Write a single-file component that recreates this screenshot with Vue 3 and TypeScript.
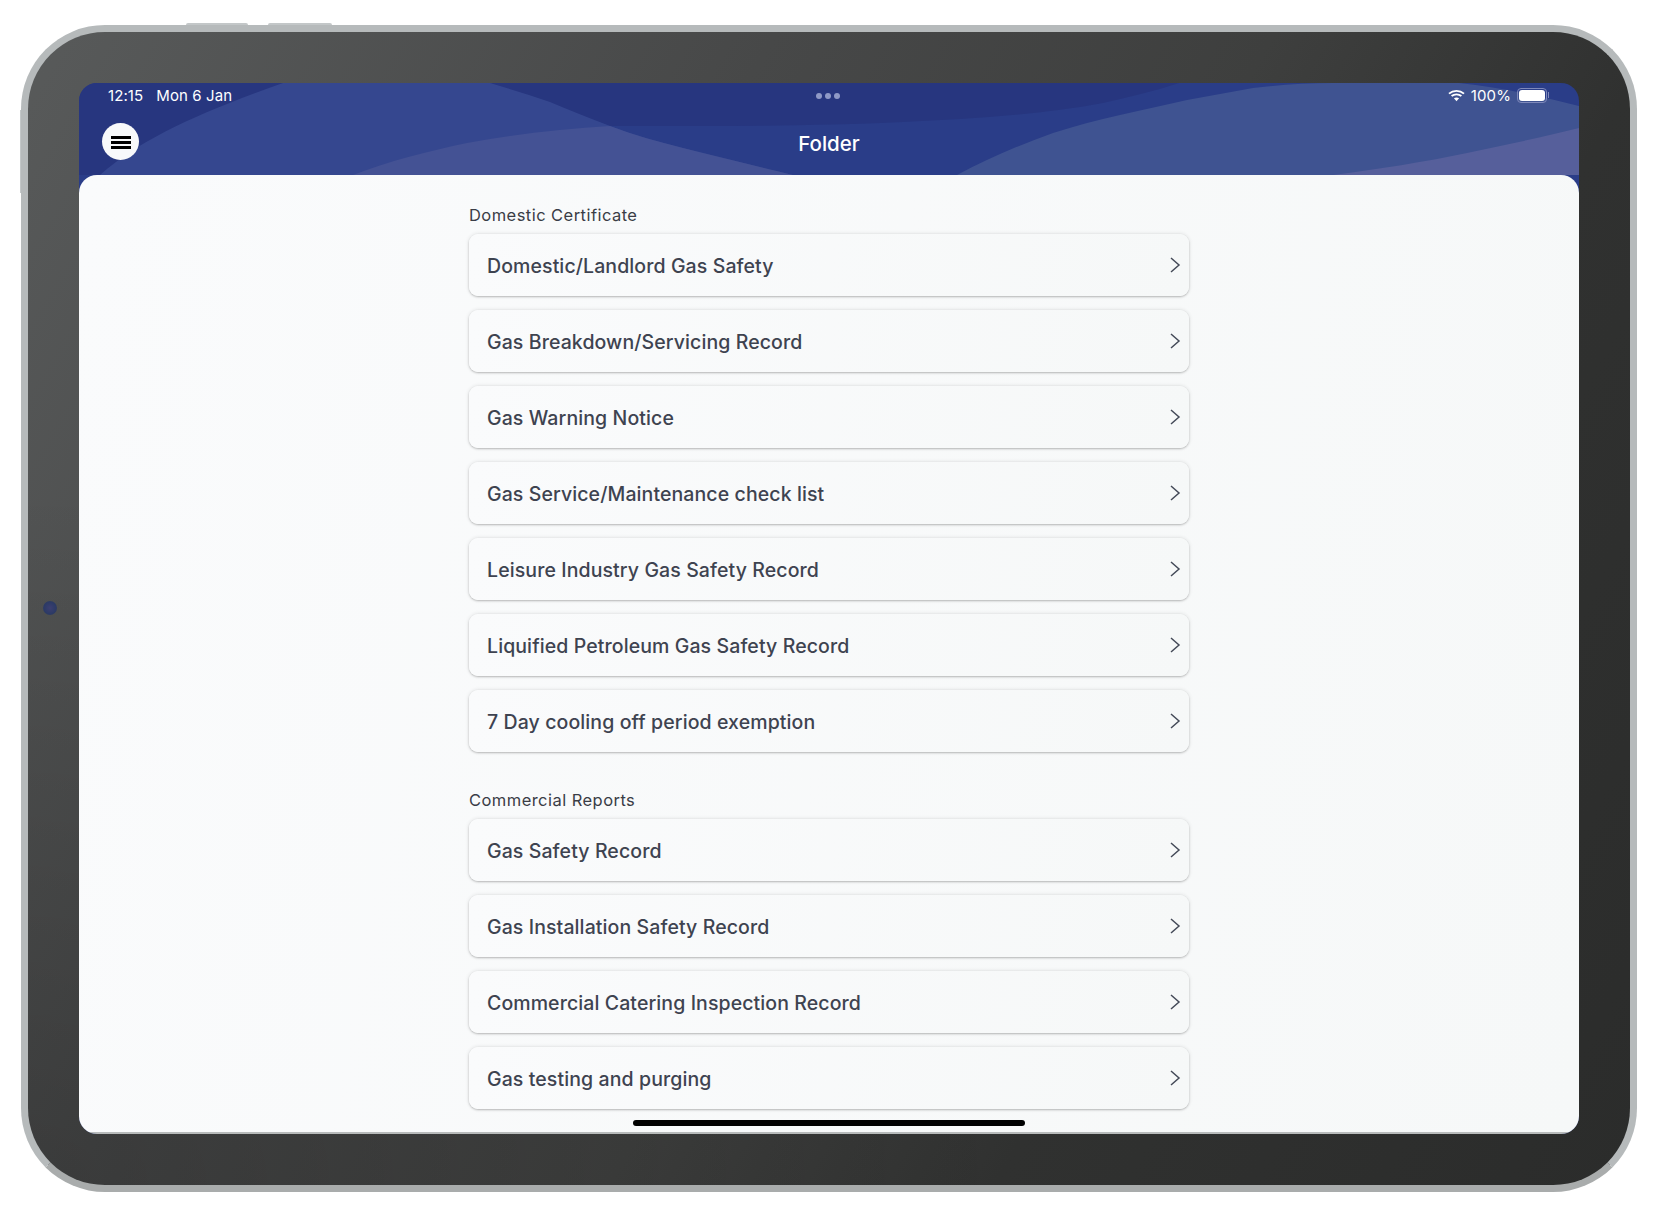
<template>
  <div class="page">
    <div class="device">
      <span class="sideBtn btnA"></span>
      <span class="sideBtn btnB"></span>
      <span class="sideBtn btnC"></span>
      <span class="camera"></span>
      <div class="screen">
        <header class="header">
          <svg class="waves" viewBox="0 0 1500 92" preserveAspectRatio="none">
            <path fill="#27367f" d="M0 0H411V92H0Z" />
            <path fill="#27367f" d="M411 0H1100C1076 8 1050 14 1024 20C960 32 890 36 824 39C760 42 690 43 621 43C590 43 560 43 531 43Z" />
            <path fill="#35478f" d="M21 92C60 57 121 29 204 0H411C431 6 451 12 471 19C490 27 510 35 531 43C555 52 580 59 604 65C640 74 680 84 714 92Z" />
            <path fill="#445294" d="M274 92C310 78 350 68 388 60C436 51 485 46 531 43C555 52 580 59 604 65C640 74 680 84 714 92Z" />
            <path fill="#3f5391" d="M878 92C908 76 940 62 974 50C996 43 1018 37 1041 32C1063 27 1086 22 1108 17C1130 13 1152 9 1174 5C1200 2 1228 0 1254 0H1380C1420 4 1460 13 1500 23V92Z" />
            <path fill="#565f9b" d="M1254 92C1300 86 1345 79 1388 70C1426 62 1464 54 1500 45V92Z" />
          </svg>
          <div class="statusBar">
            <div class="statusLeft"><span>12:15</span><span>Mon 6 Jan</span></div>
            <div class="dots"><i></i><i></i><i></i></div>
            <div class="statusRight">
              <svg class="wifi" width="17" height="13" viewBox="0 0 17 13">
                <path fill="none" stroke="#fff" stroke-width="1.9" d="M1 4.6C5.2.9 11.8.9 16 4.6M3.6 7.1C6.4 4.8 10.6 4.8 13.4 7.1" />
                <path fill="#fff" d="M5.9 9.3C7.4 8.2 9.6 8.2 11.1 9.3L8.5 12.2Z" />
              </svg>
              <span>100%</span>
              <span class="battery"><b></b></span>
            </div>
          </div>
          <div class="navBar">
            <button class="menuBtn"><i></i><i></i><i></i></button>
            <div class="title">Folder</div>
            <div></div>
          </div>
        </header>
        <main class="panel">
          <section v-for="group of groups" :key="group.title" class="group">
            <div class="groupTitle">{{ group.title }}</div>
            <div class="rows">
              <div v-for="item of group.items" :key="item" class="row">
                <span class="rowText">{{ item }}</span>
                <svg width="12" height="16" viewBox="0 0 12 16">
                  <path fill="none" stroke="#444a58" stroke-width="1.5" d="M2 1L10 8L2 15" />
                </svg>
              </div>
            </div>
          </section>
          <div class="homeBar"></div>
        </main>
      </div>
    </div>
  </div>
</template>
<script setup lang="ts">
const groups: { title: string, items: string[] }[] = [
  {
    title: 'Domestic Certificate',
    items: [
      'Domestic/Landlord Gas Safety',
      'Gas Breakdown/Servicing Record',
      'Gas Warning Notice',
      'Gas Service/Maintenance check list',
      'Leisure Industry Gas Safety Record',
      'Liquified Petroleum Gas Safety Record',
      '7 Day cooling off period exemption',
    ],
  },
  {
    title: 'Commercial Reports',
    items: [
      'Gas Safety Record',
      'Gas Installation Safety Record',
      'Commercial Catering Inspection Record',
      'Gas testing and purging',
    ],
  },
]
</script>
<style>
html, body {
  margin: 0;
  background: #fff;
}
</style>
<style scoped>
.page {
  width: 1660px;
  height: 1208px;
  box-sizing: border-box;
  padding: 25px 0 0 21px;
  overflow: hidden;
  font-family: Inter, "Liberation Sans", sans-serif;
}

.device {
  position: relative;
  width: 1616px;
  height: 1167px;
  box-sizing: border-box;
  padding: 51px;
  border: 7px solid #b6babb;
  border-bottom-color: #a9acac;
  border-radius: 84px;
  background:
    radial-gradient(ellipse 1000px 700px at 0 100%, rgba(0, 0, 0, .2), rgba(0, 0, 0, 0)),
    linear-gradient(120deg, #585a5a 0%, #474848 33%, #3e3f3e 55%, #303130 72%, #2b2c2b 100%);
}

.sideBtn {
  position: absolute;
  background: #c3c7c8;
}

.btnA,
.btnB {
  top: -9px;
  height: 2px;
  border-radius: 2px 2px 0 0;
}

.btnA {
  left: 158px;
  width: 62px;
}

.btnB {
  left: 240px;
  width: 64px;
}

.btnC {
  left: -8px;
  top: 78px;
  width: 1px;
  height: 83px;
}

.camera {
  position: absolute;
  left: 15px;
  top: 569px;
  width: 14px;
  height: 14px;
  border-radius: 50%;
  background: radial-gradient(circle, #3c3f70 0%, #2c3a66 60%, #354050 100%);
}

.screen {
  display: flex;
  flex-direction: column;
  height: 100%;
  border-radius: 18px;
  overflow: hidden;
  background: #2a3d88;
}

.header {
  position: relative;
  flex: none;
  height: 92px;
  color: #fff;
}

.waves {
  position: absolute;
  inset: 0;
  width: 100%;
  height: 100%;
}

.statusBar,
.navBar {
  position: relative;
  display: grid;
  grid-template-columns: 1fr auto 1fr;
  align-items: center;
}

.statusBar {
  height: 25px;
  padding: 0 32px 0 29px;
  font-size: 15px;
  letter-spacing: .1px;
}

.statusLeft {
  display: flex;
  gap: 13px;
}

.dots {
  display: flex;
  gap: 3px;
}

.dots i {
  width: 6px;
  height: 6px;
  border-radius: 50%;
  background: #8f99c6;
}

.statusRight {
  display: flex;
  align-items: center;
  justify-content: flex-end;
  gap: 6px;
}

.battery {
  position: relative;
  display: block;
  width: 30px;
  height: 15px;
  box-sizing: border-box;
  padding: 1px;
  border: 1px solid #7f89bb;
  border-radius: 4px;
}

.battery b {
  display: block;
  height: 100%;
  border-radius: 3px;
  background: #fff;
}

.battery::after {
  content: '';
  position: absolute;
  right: -3px;
  top: 3px;
  width: 1px;
  height: 6px;
  background: #7f89bb;
}

.navBar {
  height: 67px;
  padding: 0 23px;
  align-items: start;
}

.menuBtn {
  display: flex;
  flex-direction: column;
  align-items: center;
  justify-content: center;
  gap: 2px;
  width: 37px;
  height: 37px;
  margin-top: 15px;
  padding: 1px 0 0;
  border: none;
  border-radius: 50%;
  background: #f8f9fb;
}

.menuBtn i {
  width: 20px;
  height: 3px;
  background: #000;
}

.title {
  margin-top: 23px;
  font-size: 20.5px;
  line-height: 26px;
  font-weight: 500;
}

.panel {
  position: relative;
  flex: 1;
  min-height: 0;
  display: flex;
  flex-direction: column;
  align-items: center;
  gap: 38px;
  padding-top: 30px;
  border-radius: 18px 18px 0 0;
  border-bottom: 2px solid #b8bbbb;
  overflow: hidden;
  background: linear-gradient(100deg, #fafbfc 0%, #f6f8f8 100%);
}

.group {
  flex: none;
  width: 720px;
}

.groupTitle {
  height: 20px;
  margin-bottom: 9px;
  font-size: 16.5px;
  line-height: 20px;
  letter-spacing: .45px;
  color: #3a3d46;
}

.rows {
  display: flex;
  flex-direction: column;
  gap: 14px;
}

.row {
  display: flex;
  align-items: center;
  justify-content: space-between;
  height: 62px;
  box-sizing: border-box;
  padding: 0 8px 0 18px;
  border-radius: 9px;
  background: linear-gradient(100deg, #fafbfc 0%, #f6f8f8 100%);
  box-shadow: 0 1px 2px rgba(0, 0, 0, .22), 0 0 4px rgba(0, 0, 0, .12);
  font-size: 19.5px;
  font-weight: 500;
  letter-spacing: .1px;
  color: #3e4350;
}

.rowText {
  padding-top: 1px;
}

.homeBar {
  position: absolute;
  left: 554px;
  bottom: 6px;
  width: 392px;
  height: 6px;
  border-radius: 3px;
  background: #000;
}
</style>
